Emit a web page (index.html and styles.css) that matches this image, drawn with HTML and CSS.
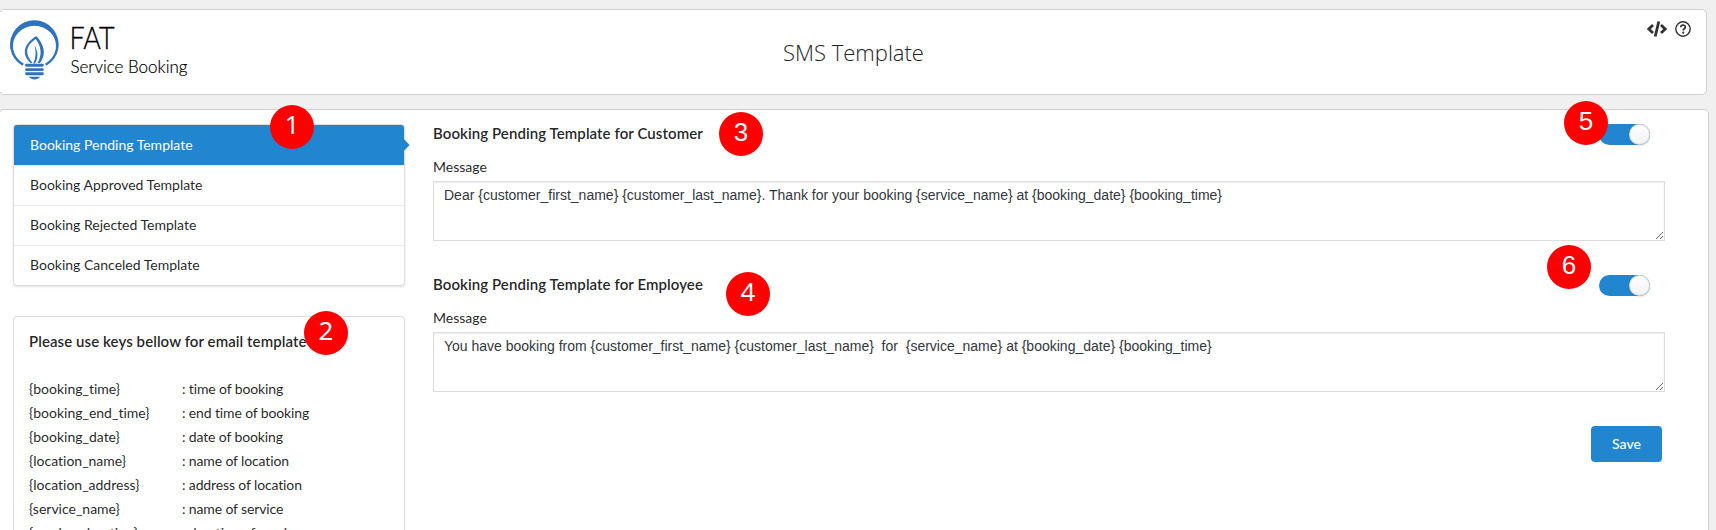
FILE: index.html
```html
<!DOCTYPE html>
<html lang="en">
<head>
<meta charset="utf-8">
<title>SMS Template</title>
<link rel="stylesheet" href="styles.css">
</head>
<body>
<header class="header">
  <svg class="logo" width="190" height="64" viewBox="0 0 190 64">
    <path d="M12.300 45.700A24.300 24.300 0 1 1 36.400 45.700L35 43.700A21.500 20.300 0 1 0 13.900 43.700Z" fill="#2f72bd"/>
    <path d="M20.500 43C11 33.500 14 24 26.200 16C33.800 24 37 34 30 43H27.500C32.500 35 31.200 26 25.600 19C15.500 26 14.500 33.500 22.500 43Z" fill="#2f72bd"/>
    <path d="M24.700 25.500C28.300 32 28.300 38 25 43.500H23.200C26 38 26 32 24.700 25.500Z" fill="#2f72bd"/>
    <path d="M16.500 45.200H32.400M16.500 49.600H32.400M16.500 53.800H32.400" stroke="#2f72bd" stroke-width="2.900" stroke-linecap="round"/>
    <path d="M18.500 56.700H30.500Q27.500 59.500 24.500 59.500Q21.500 59.500 18.500 56.700Z" fill="#2f72bd"/>
    <text class="logo-name" x="59.500" y="29" textLength="45" lengthAdjust="spacingAndGlyphs">FAT</text>
    <text class="logo-sub" x="60.500" y="52.500" textLength="117" lengthAdjust="spacingAndGlyphs">Service Booking</text>
  </svg>
  <h1 class="page-title">SMS Template</h1>
  <div class="tools">
    <svg width="20" height="16" viewBox="0 0 20 16" fill="none" stroke="#333" stroke-width="2.800"><path d="M6 4L1.800 8L6 12M14 4L18.200 8L14 12M11.800.5L8.200 15.500"/></svg>
    <svg width="16" height="16" viewBox="0 0 16 16" fill="none" stroke="#333"><circle cx="8" cy="8" r="7.200" stroke-width="1.400"/><path d="M5.700 6.300C5.900 3.400 10.400 3.500 10.400 6C10.400 7.800 8.200 7.600 8.200 9.400" stroke-width="1.700"/><circle cx="8.200" cy="11.700" r="1.100" fill="#333" stroke="none"/></svg>
  </div>
</header>

<main class="panel">
  <aside class="side">
    <nav class="menu">
      <a class="item active">Booking Pending Template</a>
      <a class="item">Booking Approved Template</a>
      <a class="item">Booking Rejected Template</a>
      <a class="item">Booking Canceled Template</a>
    </nav>
    <section class="keys">
      <h2 class="heading">Please use keys bellow for email template</h2>
      <dl class="key-list">
        <dt>{booking_time}</dt><dd>: time of booking</dd>
        <dt>{booking_end_time}</dt><dd>: end time of booking</dd>
        <dt>{booking_date}</dt><dd>: date of booking</dd>
        <dt>{location_name}</dt><dd>: name of location</dd>
        <dt>{location_address}</dt><dd>: address of location</dd>
        <dt>{service_name}</dt><dd>: name of service</dd>
        <dt>{service_duration}</dt><dd>: duration of service</dd>
      </dl>
    </section>
  </aside>

  <div class="forms">
    <section class="template">
      <div class="template-head"><h2 class="heading">Booking Pending Template for Customer</h2><span class="toggle"></span></div>
      <label class="label" for="customer">Message</label>
      <textarea class="message" id="customer">Dear {customer_first_name} {customer_last_name}. Thank for your booking {service_name} at {booking_date} {booking_time}</textarea>
    </section>
    <section class="template">
      <div class="template-head"><h2 class="heading">Booking Pending Template for Employee</h2><span class="toggle"></span></div>
      <label class="label" for="employee">Message</label>
      <textarea class="message" id="employee">You have booking from {customer_first_name} {customer_last_name}  for  {service_name} at {booking_date} {booking_time}</textarea>
    </section>
    <button class="save">Save</button>
  </div>
</main>

<span class="badge b1">1</span>
<span class="badge b2">2</span>
<span class="badge b3">3</span>
<span class="badge b4">4</span>
<span class="badge b5">5</span>
<span class="badge b6">6</span>
</body>
</html>
```
FILE: styles.css
```css
* { box-sizing: border-box; }
body {
  position: relative;
  height: 530px;
  margin: 0;
  padding-top: 9px;
  overflow: hidden;
  background: #f0f0f0;
  color: rgba(0, 0, 0, .87);
  font: 14px/20px Lato, sans-serif;
  font-variant-ligatures: none;
}
.header {
  display: grid;
  grid-template-columns: 1fr auto 1fr;
  width: 1708px;
  height: 86px;
  margin-left: -1px;
  padding: 10px 15px 0 10px;
  background: #fff;
  border: 1px solid #d0d0d0;
  border-radius: 5px;
}
.logo-name { font: 300 31px Lato, sans-serif; fill: #000; stroke: #000; stroke-width: .3px; }
.logo-sub { font: 300 18px Lato, sans-serif; fill: #000; stroke: #000; stroke-width: .2px; }
.page-title {
  margin: 16px -3px 0 3px;
  color: #222;
  font: 300 22px/32px "Open Sans", sans-serif;
}
.tools { display: flex; justify-content: flex-end; gap: 8px; padding-top: 1px; }
.panel {
  display: flex;
  gap: 28px;
  width: 1710px;
  height: 421px;
  margin: 14px 0 0 -1px;
  padding: 14px 0 0 13px;
  background: #fff;
  border: 1px solid #d0d0d0;
  border-bottom: 0;
  border-radius: 5px 5px 0 0;
}
.side { flex: none; width: 392px; }
.menu {
  height: 162px;
  border: 1px solid rgba(34, 36, 38, .15);
  border-radius: 4px;
  box-shadow: 0 1px 2px rgba(34, 36, 38, .15);
}
.item {
  position: relative;
  display: block;
  height: 40px;
  padding: 9px 16px;
  border-top: 1px solid rgba(34, 36, 38, .1);
}
.item.active {
  padding-top: 10px;
  border-top: 0;
  border-radius: 3px 3px 0 0;
  background: #2185d0;
  color: #fff;
}
.item.active::after {
  content: "";
  position: absolute;
  top: 16px;
  right: -4px;
  width: 8px;
  height: 8px;
  background: #2185d0;
  transform: rotate(45deg);
}
.keys {
  height: 214px;
  margin-top: 30px;
  padding: 14px 15px 0;
  border: 1px solid rgba(34, 36, 38, .15);
  border-bottom: 0;
  border-radius: 4px 4px 0 0;
  overflow: hidden;
}
.heading {
  margin: 0;
  font: 600 15px/20px Lato, sans-serif;
  font-variant-ligatures: none;
  letter-spacing: .08px;
}
.key-list {
  display: grid;
  grid-template-columns: 153px 1fr;
  grid-auto-rows: 24px;
  margin: 26px 0 0;
  line-height: 24px;
}
.key-list dd { margin: 0; letter-spacing: -.13px; }
.forms { display: flex; flex-direction: column; width: 1232px; }
.template { height: 151px; }
.template-head { display: flex; justify-content: space-between; height: 33px; padding-right: 15px; }
.template-head .heading { margin-top: -1px; }
.toggle {
  display: flex;
  justify-content: flex-end;
  width: 51px;
  height: 21px;
  border-radius: 11px;
  background: #2185d0;
}
.toggle::after {
  content: "";
  width: 21px;
  height: 21px;
  border-radius: 50%;
  background: linear-gradient(#fff, #f2f2f2);
  box-shadow: 0 1px 2px rgba(34, 36, 38, .15), inset 0 0 0 1px rgba(34, 36, 38, .15);
}
.label { display: block; height: 24px; }
.message {
  display: block;
  width: 1232px;
  height: 60px;
  margin: 0;
  padding: 2px 10px;
  border: 1px solid #ddd;
  background: #fff;
  box-shadow: inset 0 1px 2px rgba(0, 0, 0, .07);
  color: #32373c;
  font: 14px/22px "Liberation Sans", sans-serif;
}
.save {
  align-self: flex-end;
  width: 71px;
  height: 36px;
  margin-right: 3px;
  border: 0;
  border-radius: 4px;
  background: #2185d0;
  color: #fff;
  font: 500 14px/20px Lato, sans-serif;
}
/* Numbered callouts lie over the page */
.badge {
  position: absolute;
  width: 44px;
  height: 44px;
  border-radius: 50%;
  background: #f00;
  color: #fff;
  font: 26px/40px "Liberation Sans", sans-serif;
  text-align: center;
}
.b1 { left: 270px; top: 105px; font-family: "Open Sans", sans-serif; font-weight: 500; line-height: 38px; }
.b2 { left: 304px; top: 311px; font-family: "Noto Sans", sans-serif; line-height: 38px; }
.b3 { left: 719px; top: 112px; }
.b4 { left: 726px; top: 272px; font-family: "Noto Sans", sans-serif; line-height: 38px; }
.b5 { left: 1564px; top: 101px; }
.b6 { left: 1547px; top: 245px; }
```
